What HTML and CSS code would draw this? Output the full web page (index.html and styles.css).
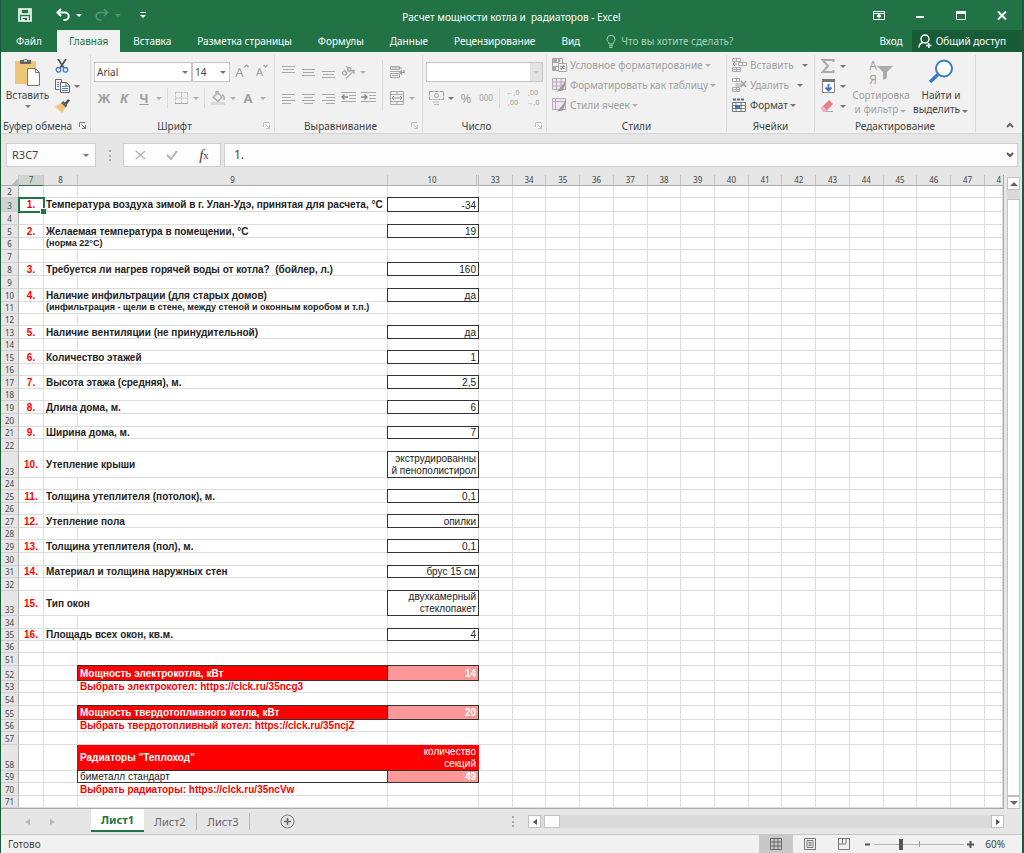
FILE: index.html
```html
<!DOCTYPE html>
<html lang="ru">
<head>
<meta charset="utf-8">
<title>Расчет мощности котла и радиаторов - Excel</title>
<link rel="stylesheet" href="styles.css">
</head>
<body>
<div class="window">
  <header class="titlebar">
    <div class="quick">
      <button class="qbtn" aria-label="Сохранить"><svg width="14" height="14" viewBox="0 0 14 14"><path d="M1 1h12v12H1z M3 1v5h8V1 M4 13V9h6v4" fill="none" stroke="#fff" stroke-width="1.6"/><path d="M5 11h2v2H5z" fill="#fff"/></svg></button>
      <button class="qbtn" aria-label="Отменить"><svg width="14" height="14" viewBox="0 0 14 14"><path d="M5 1L1.5 4.5 5 8M2 4.5h7a3.5 3.5 0 0 1 0 7.500H7.500" fill="none" stroke="#fff" stroke-width="2"/></svg></button>
      <span class="caret light"></span>
      <button class="qbtn dim" aria-label="Повторить"><svg width="14" height="14" viewBox="0 0 14 14"><path d="M9 1l3.500 3.500L9 8M12 4.500H5a3.500 3.500 0 0 0 0 7.500h1.500" fill="none" stroke="#fff" stroke-width="1.500"/></svg></button>
      <span class="caret light dim"></span>
      <button class="qbtn" aria-label="Настройка панели"><svg width="6" height="7" viewBox="0 0 6 7"><path d="M0 .5h6" stroke="#fff"/><path d="M0 3h6L3 6z" fill="#fff"/></svg></button>
    </div>
    <h1 class="title">Расчет мощности котла и  радиаторов - Excel</h1>
    <div class="winbtns">
      <button aria-label="Параметры ленты"><svg width="12" height="9" viewBox="0 0 12 9"><path d="M.5.5h11v8H.5zM.5 2.500h11" fill="none" stroke="#fff"/><path d="M6 7.500V4M4 5.500l2-2 2 2" fill="none" stroke="#fff" stroke-width="1.200"/></svg></button>
      <button aria-label="Свернуть"><svg width="8" height="9" viewBox="0 0 8 9"><path d="M0 6h8" stroke="#fff" stroke-width="2"/></svg></button>
      <button aria-label="Развернуть"><svg width="10" height="9" viewBox="0 0 10 9"><path d="M.5 1h9v7.500h-9z" fill="none" stroke="#fff"/><path d="M0 0h10v3H0z" fill="#fff"/></svg></button>
      <button aria-label="Закрыть"><svg width="10" height="9" viewBox="0 0 10 9"><path d="M1 .5l8 8M9 .5l-8 8" stroke="#fff" stroke-width="2"/></svg></button>
    </div>
  </header>

  <nav class="tabs">
    <button class="tab file">Файл</button>
    <button class="tab active">Главная</button>
    <button class="tab">Вставка</button>
    <button class="tab">Разметка страницы</button>
    <button class="tab">Формулы</button>
    <button class="tab">Данные</button>
    <button class="tab">Рецензирование</button>
    <button class="tab">Вид</button>
    <button class="tab tell"><svg width="10" height="13" viewBox="0 0 10 13"><path d="M3 9C3 7 1 6.500 1 4.300a4 4 0 0 1 8 0C9 6.500 7 7 7 9zM3 10.800h4M3.500 12.400h3" fill="none" stroke="#a8d0b8"/></svg>Что вы хотите сделать?</button>
    <span class="grow"></span>
    <button class="tab login">Вход</button>
    <button class="tab share"><svg width="14" height="14" viewBox="0 0 14 14"><circle cx="7" cy="5" r="4" fill="none" stroke="#fff" stroke-width="1.400"/><path d="M1 13.500c0-3 2-4.500 4-5M8.500 8.500l1 .5M8 11.500h5.500M10.800 9v5" fill="none" stroke="#fff" stroke-width="1.400"/></svg>Общий доступ</button>
  </nav>

  <section class="ribbon">
    <div class="group clipboard">
      <div class="body">
        <button class="big paste"><svg width="28" height="28" viewBox="0 0 28 28"><path d="M1 3h21v23H1z" fill="#edc677"/><path d="M6 2h3a3 2.500 0 0 1 5 0h3v4H6z" fill="#666"/><path d="M10 2h3v1.500h-3z" fill="#fff"/><path d="M13.500 10.500h8l4 4v13h-12z" fill="#fff" stroke="#777"/><path d="M21.500 10.500v4h4" fill="none" stroke="#777"/></svg><span>Вставить</span><span class="caret"></span></button>
        <div class="stack">
          <button class="tool" aria-label="Вырезать"><svg width="14" height="14" viewBox="0 0 14 14"><path d="M3 0l6 9M11 0L5 9" stroke="#555" stroke-width="1.800"/><circle cx="3.500" cy="10.800" r="2.300" fill="none" stroke="#4a7fc0" stroke-width="1.300"/><circle cx="10.500" cy="10.800" r="2.300" fill="none" stroke="#4a7fc0" stroke-width="1.300"/></svg></button>
          <div class="line"><button class="tool" aria-label="Копировать"><svg width="15" height="14" viewBox="0 0 15 14"><path d="M.5.5h6v3M.5.5v10h4M5.500 3.500h6l3 3v7h-9zM11 3.500v3.500h3.500" fill="#fafafa" stroke="#666"/><path d="M2 3.500h2M2 5.500h2M2 7.500h2M7 7.500h4M7 9.500h6M7 11.500h6" stroke="#4a7fc0"/></svg></button><span class="caret"></span></div>
          <button class="tool" aria-label="Формат по образцу"><svg width="15" height="14" viewBox="0 0 15 14"><path d="M0 7.500l6-3.500 4.500 4.500L7 14z" fill="#edc677"/><path d="M6 4l2.500-2 4 4.500-2 2z" fill="#666"/><path d="M9 4.500L13 0l2 1.500L11.500 6z" fill="#555"/></svg></button>
        </div>
      </div>
      <div class="foot"><span>Буфер обмена</span><button class="launch" aria-label="Буфер обмена"><svg width="7" height="7" viewBox="0 0 7 7"><path d="M.5 5V.5H6M2.500 2.500l4 4M6.500 3v3.500H3" fill="none" stroke="#777"/></svg></button></div>
    </div>

    <div class="group font">
      <div class="body rows">
        <div class="line">
          <label class="combo wide"><select aria-label="Шрифт"><option>Arial</option></select><span class="caret"></span></label>
          <label class="combo size"><select aria-label="Размер"><option>14</option></select><span class="caret"></span></label>
          <button class="tool grey letter" aria-label="Увеличить размер шрифта">A<svg class="mark" width="5" height="4" viewBox="0 0 5 4"><path d="M.5 3L2.500 1l2 2" fill="none" stroke="#999" stroke-width="1.200"/></svg></button>
          <button class="tool grey letter small" aria-label="Уменьшить размер шрифта">A<svg class="mark" width="5" height="4" viewBox="0 0 5 4"><path d="M.5 1l2 2 2-2" fill="none" stroke="#999" stroke-width="1.200"/></svg></button>
        </div>
        <div class="line grey">
          <button class="tool letter"><b>Ж</b></button><button class="tool letter"><b><i>К</i></b></button><button class="tool letter"><b><u>Ч</u></b></button><span class="caret"></span>
          <span class="sep"></span>
          <button class="tool" aria-label="Границы"><svg width="13" height="12" viewBox="0 0 13 12"><path d="M.5.5h12v11M.5.5v11M6.500.5v11M.5 6h12" fill="none" stroke="#c4b4c4" stroke-dasharray="2 1"/><path d="M0 11.500h13" stroke="#aaa"/></svg></button><span class="caret"></span>
          <span class="sep"></span>
          <button class="tool" aria-label="Цвет заливки"><svg width="15" height="14" viewBox="0 0 15 14"><path d="M2 6l5-4 4 4-4 4.500zM5 3.500V.5h2v3M11 4c2 0 2.500 2 2 5" fill="none" stroke="#aaa" stroke-width="1.300"/><path d="M0 11h14v3H0z" fill="#ddd6dd"/></svg></button><span class="caret"></span>
          <button class="tool letter"><b>A</b></button><span class="caret"></span>
        </div>
      </div>
      <div class="foot"><span>Шрифт</span><button class="launch dim" aria-label="Шрифт"><svg width="7" height="7" viewBox="0 0 7 7"><path d="M.5 5V.5H6M2.500 2.500l4 4M6.500 3v3.500H3" fill="none" stroke="#777"/></svg></button></div>
    </div>

    <div class="group align">
      <div class="body">
        <div class="rows leftcol">
          <div class="line grey">
            <button class="tool" aria-label="По верхнему краю"><svg width="13" height="12" viewBox="0 0 13 12"><path d="M0 .5h13M1 3.500h11M0 6.500h13" stroke="#aaa"/></svg></button>
            <button class="tool" aria-label="Посередине"><svg width="13" height="12" viewBox="0 0 13 12"><path d="M0 3.500h13M1 6.500h11M0 9.500h13" stroke="#aaa"/></svg></button>
            <button class="tool" aria-label="По нижнему краю"><svg width="13" height="12" viewBox="0 0 13 12"><path d="M0 5.500h13M1 8.500h11M0 11.500h13" stroke="#aaa"/></svg></button>
            <button class="tool" aria-label="Ориентация"><svg width="15" height="13" viewBox="0 0 15 13"><path d="M5 12.500l8-8M9.500 4.500H13V8" fill="none" stroke="#aaa" stroke-width="1.300"/><ellipse cx="3.500" cy="7" rx="2" ry="2" fill="none" stroke="#aaa" stroke-width="1.200"/><path d="M3 3.500L6 8M5 0l4 5" stroke="#aaa" stroke-width="1.200"/><circle cx="8.300" cy="3.500" r="1.800" fill="none" stroke="#aaa" stroke-width="1.200"/></svg></button><span class="caret"></span>
          </div>
          <div class="line grey">
            <button class="tool" aria-label="По левому краю"><svg width="13" height="11" viewBox="0 0 13 11"><path d="M0 1.500h13M0 4.500h9M0 7.500h13M0 10.500h9" stroke="#aaa"/></svg></button>
            <button class="tool" aria-label="По центру"><svg width="13" height="11" viewBox="0 0 13 11"><path d="M0 1.500h13M2 4.500h9M0 7.500h13M2 10.500h9" stroke="#aaa"/></svg></button>
            <button class="tool" aria-label="По правому краю"><svg width="13" height="11" viewBox="0 0 13 11"><path d="M0 1.500h13M4 4.500h9M0 7.500h13M4 10.500h9" stroke="#aaa"/></svg></button>
            <button class="tool" aria-label="Уменьшить отступ"><svg width="15" height="12" viewBox="0 0 15 12"><path d="M0 .5h15M8 3.500h7M8 6.500h7M0 9.500h15" stroke="#aaa"/><path d="M7 5H1M3.500 2.500L1 5l2.500 2.500" fill="none" stroke="#888" stroke-width="1.300"/></svg></button>
            <button class="tool" aria-label="Увеличить отступ"><svg width="15" height="12" viewBox="0 0 15 12"><path d="M0 .5h15M8 3.500h7M8 6.500h7M0 9.500h15" stroke="#aaa"/><path d="M0 5h6M3.500 2.500L6 5 3.500 7.500" fill="none" stroke="#888" stroke-width="1.300"/></svg></button>
          </div>
        </div>
        <span class="sep tall"></span>
        <div class="rows">
          <div class="line grey"><button class="tool" aria-label="Перенести текст"><svg width="15" height="14" viewBox="0 0 15 14"><path d="M.5 1.500h9v3h-9zM.5 8.500h9v4h-9zM0 6.500h10M2 10.500h6M2 3h10" fill="none" stroke="#aaa"/><path d="M14 5v2.500h-4M12 5.500l-2 2 2 2" fill="none" stroke="#999" stroke-width="1.200"/></svg></button></div>
          <div class="line grey"><button class="tool" aria-label="Объединить ячейки"><svg width="14" height="14" viewBox="0 0 14 14"><path d="M.5.5h13v13H.5zM.5 3.500h13M.5 10.500h13M7 .5v3M7 10.500v3" fill="none" stroke="#aaa"/><path d="M2 7h10M4 5L2 7l2 2M10 5l2 2-2 2" fill="none" stroke="#999"/></svg></button><span class="caret"></span></div>
        </div>
      </div>
      <div class="foot"><span>Выравнивание</span><button class="launch dim" aria-label="Выравнивание"><svg width="7" height="7" viewBox="0 0 7 7"><path d="M.5 5V.5H6M2.500 2.500l4 4M6.500 3v3.500H3" fill="none" stroke="#777"/></svg></button></div>
    </div>

    <div class="group number">
      <div class="body rows">
        <div class="line"><label class="combo format"><select aria-label="Числовой формат"><option></option></select><span class="caret dim"></span></label></div>
        <div class="line grey">
          <button class="tool" aria-label="Денежный формат"><svg width="15" height="14" viewBox="0 0 15 14"><path d="M.5.5h14v8h-5M.5.5v8h3" fill="none" stroke="#999" stroke-dasharray="4 1"/><circle cx="7.500" cy="4.500" r="2" fill="none" stroke="#aaa"/><path d="M4 8.500h6M4 11h6M5 13.500h5" stroke="#bbb"/></svg></button><span class="caret dark"></span>
          <button class="tool letter">%</button><button class="tool zeros">000</button>
          <span class="sep"></span>
          <button class="tool decimals"><span>←,0</span><span>,00</span></button>
          <button class="tool decimals"><span>,00</span><span>→,0</span></button>
        </div>
      </div>
      <div class="foot"><span>Число</span><button class="launch dim" aria-label="Число"><svg width="7" height="7" viewBox="0 0 7 7"><path d="M.5 5V.5H6M2.500 2.500l4 4M6.500 3v3.500H3" fill="none" stroke="#777"/></svg></button></div>
    </div>

    <div class="group styles">
      <div class="body list grey">
        <button class="item"><svg width="15" height="14" viewBox="0 0 15 14"><path d="M.5.5h10v12H.5zM.5 4.500h6M.5 8.500h6" fill="none" stroke="#a5a5a5"/><path d="M1 1h4v3H1zM1 9h3v3H1zM6 1h2v3H6z" fill="#aaa"/><path d="M6.500 5.500h8v8h-8z" fill="#f3f1f3" stroke="#a5a5a5"/><path d="M8 8.500h5M8 10.500h5M12 7l-3 5" stroke="#999"/></svg>Условное форматирование<span class="caret"></span></button>
        <button class="item"><svg width="15" height="14" viewBox="0 0 15 14"><path d="M.5.5h13v11H.5zM.5 4h13M.5 8h13M4.500.5v11M9 .5v11" fill="#eee6ee" stroke="#b5adb5"/><path d="M14.500 1.500L9 9l-4 4.500 6-1z" fill="#999"/></svg>Форматировать как таблицу<span class="caret"></span></button>
        <button class="item"><svg width="15" height="14" viewBox="0 0 15 14"><path d="M.5.5h13v11H.5zM.5 3.500h13M3.500.5v11" fill="#eee6ee" stroke="#b5adb5"/><path d="M14.500 1.500L9 9l-4 4.500 6-1z" fill="#999"/></svg>Стили ячеек<span class="caret"></span></button>
      </div>
      <div class="foot"><span>Стили</span></div>
    </div>

    <div class="group cells">
      <div class="body list grey">
        <button class="item"><svg width="15" height="14" viewBox="0 0 15 14"><path d="M.5.5h8v3h-8zM4.500.5v3M.5 9.500h8v4h-8zM4.500 9.500v4M.5 11.500h8M6.500 4.500h8v3h-8zM10.500 4.500v3" fill="none" stroke="#aaa"/><path d="M5 6H1M3 4L1 6l2 2" fill="none" stroke="#999"/></svg>Вставить<span class="caret dark far"></span></button>
        <button class="item"><svg width="15" height="14" viewBox="0 0 15 14"><path d="M.5.5h7v3h-7zM4.500.5v3M.5 9.500h7v4h-7zM4.500 9.500v4M.5 11.500h7M4 6h5v2H4z" fill="none" stroke="#aaa"/><path d="M9 3l5 6M14 3L9 9" stroke="#999" stroke-width="1.200"/></svg>Удалить<span class="caret dark far"></span></button>
        <button class="item on"><svg width="15" height="15" viewBox="0 0 15 15"><path d="M1 1.500h11" stroke="#3b74b8" stroke-dasharray="3 1" stroke-width="2"/><path d="M.5 4.500h13v9H.5zM.5 7.500h13M.5 10.500h13M4 4.500v9M9 4.500v9" fill="#fff" stroke="#777"/><path d="M3 7h5v4H3z" fill="#3b74b8"/></svg>Формат<span class="caret"></span></button>
      </div>
      <div class="foot"><span>Ячейки</span></div>
    </div>

    <div class="group edit">
      <div class="body">
        <div class="stack">
          <div class="line"><button class="tool" aria-label="Автосумма"><svg width="14" height="14" viewBox="0 0 14 14"><path d="M12.500 3V1H1.500L7 7l-5.500 6h11v-2" fill="none" stroke="#aaa" stroke-width="2"/></svg></button><span class="caret"></span></div>
          <div class="line"><button class="tool" aria-label="Заполнить"><svg width="13" height="14" viewBox="0 0 13 14"><path d="M.5.5h12v13H.5z" fill="#fff" stroke="#888"/><path d="M0 0h13v3H0z" fill="#777"/><path d="M6.500 5v7M3.500 8.500l3 3 3-3" fill="none" stroke="#3b74b8" stroke-width="1.800"/></svg></button><span class="caret"></span></div>
          <div class="line"><button class="tool" aria-label="Очистить"><svg width="14" height="13" viewBox="0 0 14 13"><path d="M0 8l8-8 4 4-7 7.500H2z" fill="#e8808c"/><path d="M0 8l2 3.500h3l1-1L2.500 6z" fill="#f3b3bb"/><path d="M5 11.500h7" stroke="#aaa"/></svg></button><span class="caret"></span></div>
        </div>
        <button class="big sort grey"><span class="sorticon"><span class="az"><span>А</span><span>Я</span></span><svg width="16" height="14" viewBox="0 0 16 14"><path d="M0 0h16L10 6v6l-4 2V6z" fill="#aaa"/></svg></span><span>Сортировка</span><span>и фильтр<i class="caret"></i></span></button>
        <button class="big find"><svg width="26" height="28" viewBox="0 0 26 28"><circle cx="16" cy="10.500" r="8" fill="#fdfdfd" stroke="#3b79bd" stroke-width="2"/><path d="M10 16.500l-8 7.500" stroke="#3b79bd" stroke-width="3.500"/></svg><span>Найти и</span><span>выделить<i class="caret"></i></span></button>
      </div>
      <div class="foot"><span>Редактирование</span></div>
    </div>
    <button class="collapse" aria-label="Свернуть ленту"><svg width="8" height="6" viewBox="0 0 8 6"><path d="M1 5l3-3 3 3" fill="none" stroke="#666" stroke-width="2"/></svg></button>
  </section>

  <section class="formula">
    <label class="namebox"><input value="R3C7" aria-label="Имя"><span class="caret"></span></label>
    <span class="dots"></span>
    <div class="fxbox">
      <button aria-label="Отмена"><svg width="11" height="10" viewBox="0 0 11 10"><path d="M1 1l9 8M10 1L1 9" stroke="#b5b5b5" stroke-width="1.500"/></svg></button>
      <button aria-label="Ввод"><svg width="12" height="10" viewBox="0 0 12 10"><path d="M1 5l4 4 6-8" fill="none" stroke="#b5b5b5" stroke-width="2"/></svg></button>
      <button class="fx" aria-label="Вставить функцию"><i>f</i><sub>x</sub></button>
    </div>
    <label class="fxinput"><input value="1." aria-label="Строка формул"><svg width="8" height="6" viewBox="0 0 8 6"><path d="M1 1l3 3 3-3" fill="none" stroke="#555" stroke-width="2"/></svg></label>
  </section>

  <main class="sheet">
    <table class="grid" id="grid"></table>
    <div class="vscroll">
      <button class="sbtn" aria-label="Вверх"><svg width="8" height="4" viewBox="0 0 8 4"><path d="M0 4h8L4 0z" fill="#666"/></svg></button>
      <div class="vtrack"><div class="vthumb"></div></div>
      <button class="sbtn" aria-label="Вниз"><svg width="8" height="4" viewBox="0 0 8 4"><path d="M0 0h8L4 4z" fill="#666"/></svg></button>
    </div>
  </main>

  <div class="sheetbar">
    <div class="sheetnav">
      <button aria-label="Предыдущий лист"><svg width="5" height="6" viewBox="0 0 5 6"><path d="M5 0v6L0 3z" fill="#bbb"/></svg></button>
      <button aria-label="Следующий лист"><svg width="5" height="6" viewBox="0 0 5 6"><path d="M0 0v6l5-3z" fill="#bbb"/></svg></button>
    </div>
    <button class="stab active">Лист1</button>
    <button class="stab">Лист2</button>
    <button class="stab">Лист3</button>
    <button class="add" aria-label="Новый лист"><svg width="15" height="15" viewBox="0 0 15 15"><circle cx="7.500" cy="7.500" r="6.500" fill="none" stroke="#777"/><path d="M4 7.500h7M7.500 4v7" stroke="#666" stroke-width="1.600"/></svg></button>
    <span class="grow"></span>
    <span class="dots"></span>
    <div class="hscroll">
      <button class="sbtn" aria-label="Влево"><svg width="4" height="6" viewBox="0 0 4 6"><path d="M4 0v6L0 3z" fill="#555"/></svg></button>
      <div class="htrack"><div class="hthumb"></div></div>
      <button class="sbtn" aria-label="Вправо"><svg width="4" height="6" viewBox="0 0 4 6"><path d="M0 0v6l4-3z" fill="#555"/></svg></button>
    </div>
  </div>

  <footer class="status">
    <span class="ready">Готово</span>
    <span class="grow"></span>
    <button class="view on" aria-label="Обычный"><svg width="12" height="12" viewBox="0 0 12 12"><path d="M.5.5h11v11H.5zM.5 4h11M.5 8h11M4 .5v11M8 .5v11" fill="none" stroke="#666"/></svg></button>
    <button class="view" aria-label="Разметка страницы"><svg width="12" height="12" viewBox="0 0 12 12"><path d="M.5.5h11v11H.5zM3 2.500h6v7H3zM4.500 4.500h3M4.500 6h3M4.500 7.500h3" fill="none" stroke="#777"/></svg></button>
    <button class="view" aria-label="Страничный режим"><svg width="12" height="12" viewBox="0 0 12 12"><path d="M.5.5h11v11H.5zM4.500.5v5M8 .5v5M.5 6h7.500" fill="none" stroke="#777"/></svg></button>
    <button class="zoombtn" aria-label="Уменьшить"><svg width="7" height="7" viewBox="0 0 7 7"><path d="M1 3.500h5" stroke="#555" stroke-width="2"/></svg></button>
    <input class="zoom" type="range" min="0" max="100" value="29" aria-label="Масштаб">
    <button class="zoombtn" aria-label="Увеличить"><svg width="7" height="7" viewBox="0 0 7 7"><path d="M0 3.500h7M3.500 0v7" stroke="#555" stroke-width="2"/></svg></button>
    <span class="percent">60%</span>
  </footer>
</div>
<script src="grid.js"></script>
</body>
</html>
```
FILE: grid.js
```js
// Each row: [row number, height, number, label, value, kind]
const rows = [
  [2, 12], [3, 14, "1.", "Температура воздуха зимой в г. Улан-Удэ, принятая для расчета, °C", "-34"],
  [4, 13], [5, 13, "2.", "Желаемая температура в помещении, °C", "19"],
  [6, 12, "", "(норма 22°C)", "", "note"],
  [7, 13], [8, 13, "3.", "Требуется ли нагрев горячей воды от котла?  (бойлер, л.)", "160"],
  [9, 13], [10, 13, "4.", "Наличие инфильтрации (для старых домов)", "да"],
  [11, 12, "", "(инфильтрация - щели в стене, между стеной и оконным коробом и т.п.)", "", "note"],
  [12, 12], [13, 13, "5.", "Наличие вентиляции (не принудительной)", "да"],
  [14, 12], [15, 13, "6.", "Количество этажей", "1"],
  [16, 12], [17, 13, "7.", "Высота этажа (средняя), м.", "2,5"],
  [18, 12], [19, 13, "8.", "Длина дома, м.", "6"],
  [20, 13], [21, 12, "9.", "Ширина дома, м.", "7"],
  [22, 13], [23, 26, "10.", "Утепление крыши", "экструдированны\nй пенополистирол", "tall"],
  [24, 12], [25, 13, "11.", "Толщина утеплителя (потолок), м.", "0,1"],
  [26, 12], [27, 13, "12.", "Утепление пола", "опилки"],
  [28, 12], [29, 13, "13.", "Толщина утеплителя (пол), м.", "0,1"],
  [30, 13], [31, 12, "14.", "Материал и толщина наружных стен", "брус 15 см"],
  [32, 13], [33, 25, "15.", "Тип окон", "двухкамерный\nстеклопакет", "tall"],
  [34, 13], [35, 12, "16.", "Площадь всех окон, кв.м.", "4"],
  [36, 12], [51, 13], [52, 15, "", "Мощность электрокотла, кВт", "14", "result"],
  [53, 12, "", "Выбрать электрокотел: https://clck.ru/35ncg3", "", "link"],
  [54, 13], [55, 14, "", "Мощность твердотопливного котла, кВт", "20", "result"],
  [56, 12, "", "Выбрать твердотопливный котел: https://clck.ru/35ncjZ", "", "link"],
  [57, 13], [58, 26, "", "Радиаторы \"Теплоход\"", "количество\nсекций", "heading"],
  [59, 12, "", "биметалл стандарт", "49", "detail"],
  [70, 13, "", "Выбрать радиаторы: https://clck.ru/35ncVw", "", "link"],
  [71, 12]
];
const extra = Array.from({ length: 15 }, (_, i) => 33 + i);
const indented = ["result", "link", "heading", "detail"];
const filler = "<td></td>".repeat(16);

const head = '<colgroup><col class="c-head"><col class="c7"><col class="c8"><col class="c9"><col class="c10">' +
  "<col>".repeat(15) + '<col class="c-last"></colgroup><thead><tr><th class="corner"></th><th class="sel">7</th><th>8</th><th>9</th><th class="hid">10</th>' +
  extra.map(n => `<th>${n}</th>`).join("") + '<th class="cut">4</th></tr></thead>';

const body = rows.map(([n, h, num = "", label = "", value = "", kind = ""]) => {
  const k = kind ? " " + kind : "";
  const labels = !label ? "<td></td><td></td>"
    : indented.includes(kind) ? `<td></td><td class="label${k}">${label}</td>`
    : `<td class="label${k}" colspan="2">${label}</td>`;
  const val = value ? `<td class="value${k}">${value}</td>` : "<td></td>";
  const pick = n === 3;
  return `<tr style="height:${h}px"><th class="rownum${pick ? " sel" : ""}">${n}</th>` +
    `<td class="num${pick ? " picked" : ""}">${num}</td>${labels}${val}${filler}</tr>`;
}).join("");

document.getElementById("grid").innerHTML = head + "<tbody>" + body + "</tbody>";
```
FILE: styles.css
```css
* { box-sizing: border-box; }
body { margin: 0; background: #e6e6e6; color: #444; font: 10px/14px "Noto Sans", "Open Sans", sans-serif; }
button { border: 0; padding: 0; margin: 0; background: none; color: inherit; font: inherit; white-space: nowrap; display: flex; align-items: center; justify-content: center; }
input, select { font: inherit; color: inherit; border: 0; padding: 0; margin: 0; background: none; min-width: 0; outline: 0; }
svg { display: block; flex: none; }
.window { min-height: 100vh; display: flex; flex-direction: column; border-left: 1px solid #1d5a3b; border-right: 2px solid #1d5a3b; overflow: hidden; }
.grow { flex: 1; }
.caret { flex: none; width: 10px; height: 10px; display: inline-flex; align-items: center; justify-content: center; color: #777; }
.caret::before { content: ""; border: 3px solid transparent; border-top-color: currentColor; border-bottom: 0; }
.caret.light { color: #fff; }
.grey .caret { color: #b0b0b0; }
.grey .caret.dark { color: #777; }
.dim { opacity: .4; }
.grey { color: #a0a0a0; }

.titlebar { height: 30px; background: #217346; color: #fff; display: grid; grid-template-columns: 1fr auto 1fr; align-items: center; }
.title { margin: 0; padding-top: 4px; font-size: 10px; font-weight: 400; line-height: 16px; white-space: pre; }
.quick { display: flex; align-items: center; padding-left: 14px; }
.qbtn { width: 20px; height: 28px; }
.qbtn + .qbtn { margin-left: 18px; }
.quick .caret { margin-left: 1px; }
.quick .caret + .qbtn { margin-left: 8px; }
.quick .caret.dim + .qbtn { margin-left: 10px; }
.qbtn.dim, .quick .dim { opacity: .25; }
.winbtns { display: flex; justify-content: flex-end; }
.winbtns button { width: 41px; height: 28px; }

.tabs { height: 22px; background: #217346; color: #fff; display: flex; }
.tab { padding: 0 13px; }
.tab.file { width: 56px; }
.tab.active { background: #f1f1f1; color: #217346; padding: 0 12px; }
.tab.tell { gap: 5px; color: #a8d0b8; }
.tab.login { padding: 0 9px; }
.tab.share { background: #185c37; gap: 4px; padding: 0 16px 0 6px; }

.ribbon { height: 82px; background: #f1f1f1; border-bottom: 1px solid #d5d5d5; padding: 3px 0 1px; display: flex; }
.group { display: flex; flex-direction: column; border-right: 1px solid #dadada; flex: none; }
.clipboard { width: 90px; }
.font { width: 184px; }
.align { width: 148px; }
.number { width: 124px; }
.styles { width: 180px; }
.cells { width: 88px; }
.edit { width: 161px; }
.body { flex: 1; display: flex; }
.rows { display: flex; flex-direction: column; gap: 6px; padding: 7px 0 0 3px; }
.align .rows + .sep + .rows { padding-left: 0; }
.leftcol { width: 107px; }
.line { display: flex; align-items: center; height: 20px; }
.tool { width: 20px; height: 20px; flex: none; }
.letter { font-size: 13px; }
.letter.small { font-size: 11px; }
.mark { align-self: flex-start; margin-top: 2px; }
.zeros { font-size: 8px; }
.decimals { flex-direction: column; font-size: 7px; line-height: 10px; }
.sep { width: 1px; height: 20px; background: #dadada; margin: 0 3px; flex: none; }
.sep.tall { height: 50px; margin-top: 5px; margin-right: 4px; margin-left: 0; }
.foot { height: 16px; padding-top: 3px; display: flex; align-items: center; }
.foot span { flex: 1; text-align: center; white-space: nowrap; }
.launch { width: 16px; }
.combo { display: flex; align-items: center; height: 20px; background: #fff; border: 1px solid #c6c6c6; padding-left: 2px; }
.combo select { flex: 1; appearance: none; }
.combo .caret { width: 12px; }
.combo.wide { width: 98px; }
.combo.size { width: 38px; margin-right: 2px; }
.combo.format { width: 117px; }
.combo.format .caret { background: #bbb; height: 18px; }
.big { flex-direction: column; justify-content: flex-start; padding-top: 3px; }
.big svg { margin-bottom: 2px; }
.big .caret { width: 8px; height: 8px; margin-left: 1px; }
.paste { width: 50px; padding-left: 3px; }
.sort { width: 62px; }
.find { width: 58px; }
.stack { display: flex; flex-direction: column; padding-top: 1px; padding-left: 1px; }
.edit .stack { width: 35px; padding-left: 3px; }
.list { flex-direction: column; padding: 0 0 0 5px; }
.item { height: 20px; justify-content: flex-start; gap: 2px; }
.item svg { margin-right: 1px; }
.item.on { color: #444; }
.item .caret { width: 6px; }
.item .caret.far { margin-left: 6px; }
.item.on .caret { color: #777; }
.sorticon { display: flex; align-items: center; height: 30px; }
.sorticon svg { margin: 0; }
.az { display: flex; flex-direction: column; font-size: 12px; line-height: 14px; }
.collapse { margin-left: auto; align-self: flex-end; width: 24px; height: 14px; }

.formula { display: flex; height: 41px; padding: 9px 4px 8px 5px; }
.namebox, .fxbox, .fxinput { display: flex; align-items: center; height: 24px; background: #fdfdfd; border: 1px solid #cfcfcf; }
.namebox { width: 90px; padding: 0 4px 0 5px; font-size: 11px; }
.namebox input { flex: 1; }
.dots { width: 27px; display: flex; align-items: center; justify-content: center; }
.dots::before { content: ""; height: 11px; border-left: 2px dotted #aaa; }
.fxbox { width: 98px; margin-right: 3px; }
.fxbox button { width: 32px; }
.fx { font: 15px "Liberation Serif", serif; color: #444; }
.fx sub { font-size: 11px; }
.fxinput { flex: 1; padding: 0 3px 0 9px; }
.fxinput input { flex: 1; font-size: 12px; }

.sheet { flex: 1; display: flex; }
.grid { flex: 1; width: 0; table-layout: fixed; border-collapse: separate; border-spacing: 0; background: #fff; border-right: 1px solid #ababab; border-bottom: 1px solid #ababab; font: 10px/11px "Liberation Sans", Arial, sans-serif; color: #222; }
.c-head { width: 18px; }
.c7 { width: 25px; }
.c8 { width: 34px; }
.c9 { width: 310px; }
.c10 { width: 91px; }
.c-last { width: 18px; }
.grid td { padding: 0 2px; border-right: 1px solid #dcdcdc; border-bottom: 1px solid #dcdcdc; white-space: pre; }
.grid th { padding: 0; background: #e6e6e6; font: 8px/10px "Noto Sans", sans-serif; color: #444; border-right: 1px solid #c4c4c4; border-bottom: 1px solid #ababab; }
.grid thead th { height: 11px; }
.grid thead th.sel { background: #d2d2d2; color: #217346; border-bottom-color: #217346; }
.grid thead th.hid { border-right: 3px double #c0c0c0; }
.grid thead th.cut { text-align: right; border-right: 0; padding-right: 2px; }
.grid thead th.corner { background: linear-gradient(135deg, #e6e6e6 75%, #bbb 75%); }
.grid th.rownum { vertical-align: bottom; border-right-color: #ababab; border-bottom-color: #cfcfcf; }
.grid th.rownum.sel { background: #d2d2d2; color: #217346; }
.grid td.num { color: #f00; font-weight: 700; text-align: center; }
.grid td.picked { position: relative; outline: 2px solid #217346; outline-offset: -1px; }
.picked::after { content: ""; position: absolute; right: -3px; bottom: -3px; width: 5px; height: 5px; background: #217346; border: solid #fff; border-width: 1px 0 0 1px; }
.grid td.label { font-weight: 700; }
.grid td.note { font-size: 9px; }
.grid td.value { text-align: right; vertical-align: bottom; border-color: #333; box-shadow: -1px 0 #333, 0 -1px #333, -1px -1px #333; }
.grid td.value.tall, .grid td.value.heading { line-height: 12px; }
.grid td.link { color: #f00; }
.grid td.label.result, .grid td.heading { background: #f00; color: #fff; border-color: #333; }
.grid td.label.result, .grid td.label.detail { box-shadow: -1px 0 #333, 0 -1px #333, -1px -1px #333; border-color: #333; }
.grid td.value.result, .grid td.value.detail { background: #f99; color: #fff; font-weight: 700; vertical-align: middle; }
.grid td.heading { border-right-color: #f00; box-shadow: -1px 0 #f00; }
.grid td.value.heading { box-shadow: none; }
.grid td.label.detail { font-weight: 400; }

.vscroll { width: 18px; padding: 2px 2px 0 3px; display: flex; flex-direction: column; }
.sbtn { width: 13px; height: 13px; background: #fff; border: 1px solid #c0c0c0; flex: none; }
.vtrack { flex: 1; background: #dadada; padding-top: 9px; display: flex; }
.vthumb { flex: 1; background: #fff; border: 1px solid #c0c0c0; }

.sheetbar { height: 26px; display: flex; border-bottom: 1px solid #c6c6c6; color: #666; font-size: 11px; }
.sheetnav { width: 90px; display: flex; padding-left: 14px; }
.sheetnav button { width: 25px; }
.stab { width: 53px; height: 23px; }
.stab.active { background: #fff; border-bottom: 2px solid #217346; color: #217346; font-weight: 700; width: 53px; }
.stab:not(.active) { border-right: 1px solid #b5b5b5; height: 17px; margin-top: 4px; }
.add { width: 74px; }
.hscroll { width: 476px; display: flex; margin: 6px 18px 0 0; height: 13px; }
.sheetbar .dots { width: 30px; }
.htrack { flex: 1; background: #dadada; padding-left: 3px; display: flex; }
.hthumb { width: 16px; background: #fff; border: 1px solid #c0c0c0; }

.status { height: 18px; background: #f1f1f1; display: flex; align-items: center; padding-right: 17px; }
.ready { padding-left: 7px; }
.view { width: 34px; height: 18px; }
.view.on { background: #c8c8c8; }
.zoombtn { width: 13px; height: 18px; }
.zoom { width: 90px; height: 12px; appearance: none; background: linear-gradient(#999, #999) center / 1px 6px no-repeat, linear-gradient(#b5b5b5, #b5b5b5) center / 100% 1px no-repeat; }
.zoom::-webkit-slider-thumb { appearance: none; width: 4px; height: 11px; background: #555; }
.percent { width: 28px; text-align: right; }
```
